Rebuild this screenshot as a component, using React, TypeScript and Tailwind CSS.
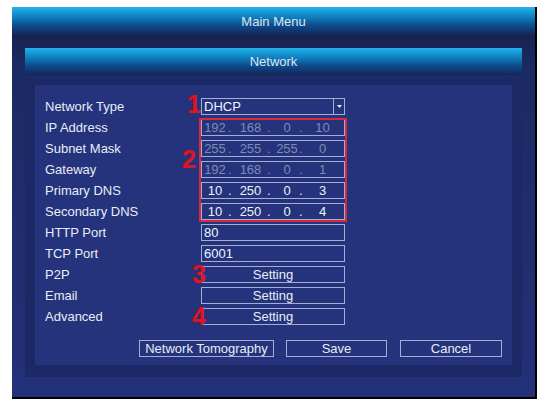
import React from "react";

const font = { fontFamily: '"Liberation Sans", Arial, sans-serif' };

function Box({ children, className = "" }: { children?: React.ReactNode; className?: string }) {
  return (
    <div className={"w-[144px] h-[17px] border border-[#a3aed2] flex items-center " + className}>
      {children}
    </div>
  );
}

function Ip({ parts, dim }: { parts: string[]; dim?: boolean }) {
  const c = dim ? "text-[#7f8bb3]" : "text-[#eef2f8]";
  return (
    <Box className={c}>
      <span className="w-[26px] text-center">{parts[0]}</span>
      <span className="w-0">.</span>
      <span className="w-[45px] text-center">{parts[1]}</span>
      <span className="w-0 ml-[-6px] mr-[6px]">.</span>
      <span className="w-[28px] text-center">{parts[2]}</span>
      <span className="w-0 ml-[-2px] mr-[2px]">.</span>
      <span className="w-[43px] text-center">{parts[3]}</span>
    </Box>
  );
}

function Row({ label, children }: { label: string; children: React.ReactNode }) {
  return (
    <div className="h-[21px] flex items-center">
      <div className="w-[156px] text-[#e8edf6]">{label}</div>
      {children}
    </div>
  );
}

function Setting() {
  return <Box className="justify-center text-[#e8edf6]">Setting</Box>;
}

const headerGrad = "bg-[linear-gradient(to_bottom,#22b3ea_0%,#1288c8_30%,#0d4d8e_65%,#15245a_100%)]";

export default function App() {
  return (
    <div className="w-[546px] h-[408px] bg-white pl-[12px] pt-[7px] text-[13px] leading-none" style={font}>
      <div className="w-[525px] h-[392px] bg-[#1f2d6e] border-r-2 border-b-2 border-black flex flex-col">
        <div className={"h-[28px] flex items-center justify-center text-[#dde6f1] text-[13px] " + headerGrad}>
          Main Menu
        </div>
        <div className="flex-1 pt-[13px] px-[13px] pb-[20px] bg-[linear-gradient(to_bottom,#17224f_0px,#1c2a62_30px,#223179_100%)]">
          <div className="h-full bg-[#1c2966] flex flex-col">
            <div className={"h-[27px] flex items-center justify-center text-[#dde6f1] text-[13px] " + headerGrad}>
              Network
            </div>
            <div className="relative flex-1 mx-[10px] mt-[10px] mb-[12px] bg-[#24337c] pl-[10px] pt-[11px]">
              <Row label="Network Type">
                <Box className="text-[#f2f5fa] pl-[2px] justify-between">
                  <span>DHCP</span>
                  <span className="w-[11px] h-full border-l border-[#a3aed2] flex items-center justify-center">
                    <svg width="5" height="3" viewBox="0 0 5 3">
                      <polygon points="0,0 5,0 2.5,3" fill="#e8edf6" />
                    </svg>
                  </span>
                </Box>
              </Row>
              <Row label="IP Address">
                <Ip parts={["192", "168", "0", "10"]} dim />
              </Row>
              <Row label="Subnet Mask">
                <Ip parts={["255", "255", "255", "0"]} dim />
              </Row>
              <Row label="Gateway">
                <Ip parts={["192", "168", "0", "1"]} dim />
              </Row>
              <Row label="Primary DNS">
                <Ip parts={["10", "250", "0", "3"]} />
              </Row>
              <Row label="Secondary DNS">
                <Ip parts={["10", "250", "0", "4"]} />
              </Row>
              <Row label="HTTP Port">
                <Box className="text-[#f2f5fa] pl-[2px]">80</Box>
              </Row>
              <Row label="TCP Port">
                <Box className="text-[#f2f5fa] pl-[2px]">6001</Box>
              </Row>
              <Row label="P2P">
                <Setting />
              </Row>
              <Row label="Email">
                <Setting />
              </Row>
              <Row label="Advanced">
                <Setting />
              </Row>
              <div className="flex mt-[13px] ml-[94px] gap-[12px] text-[#e8edf6]">
                <div className="w-[135px] h-[17px] border border-[#a3aed2] flex items-center justify-center">Network Tomography</div>
                <div className="w-[101px] h-[17px] border border-[#a3aed2] flex items-center justify-center">Save</div>
                <div className="w-[102px] h-[17px] border border-[#a3aed2] flex items-center justify-center ml-[1px]">Cancel</div>
              </div>

              <div className="absolute left-[164px] top-[33px] w-[148px] h-[104px] border-2 border-[#d9283a]" />
              <span className="absolute left-[152px] top-[7px] text-[25px] font-bold text-[#e0141e] leading-none">1</span>
              <span className="absolute left-[147px] top-[62px] text-[25px] font-bold text-[#e0141e] leading-none">2</span>
              <span className="absolute left-[157px] top-[177px] text-[25px] font-bold text-[#e0141e] leading-none">3</span>
              <span className="absolute left-[157px] top-[219px] text-[25px] font-bold text-[#e0141e] leading-none">4</span>
            </div>
          </div>
        </div>
      </div>
    </div>
  );
}
